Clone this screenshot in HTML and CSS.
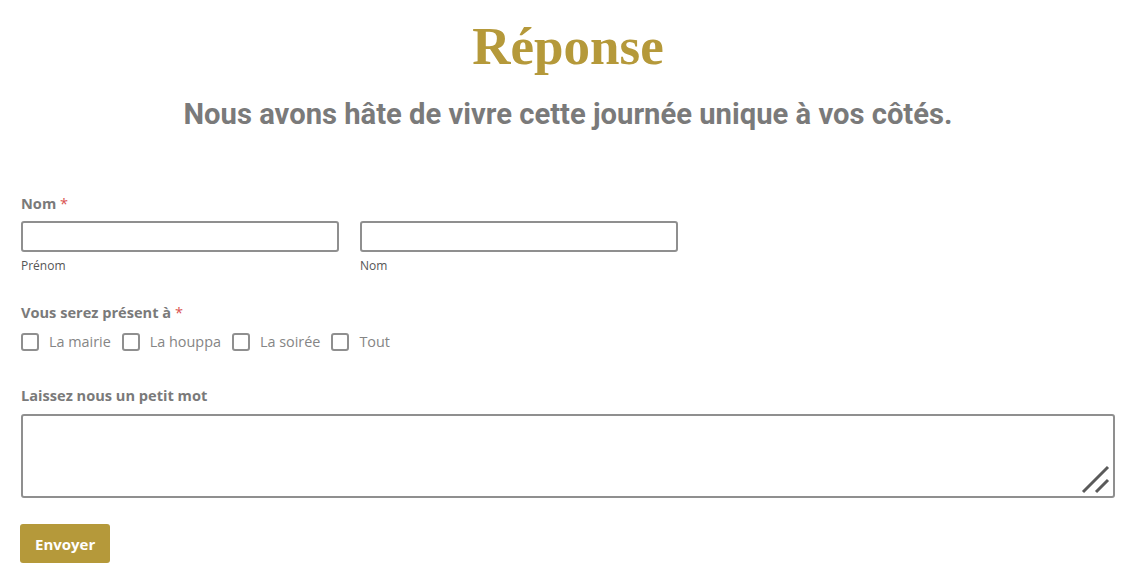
FILE: index.html
```html
<!DOCTYPE html>
<html lang="fr">

<head>
  <meta charset="UTF-8">
  <meta name="viewport" content="width=device-width, initial-scale=1.0">
  <title>Réponse</title>
  <link rel="stylesheet" href="styles.css">
</head>

<body>
  <div class="page">
    <h1 class="title">Réponse</h1>
    <h2 class="subtitle">Nous avons hâte de vivre cette journée unique à vos côtés.</h2>

    <form class="rsvp">
      <div class="field">
        <span class="label">Nom <span class="req">*</span></span>
        <div class="name-row">
          <label class="name-part">
            <input type="text" class="box">
            <span class="sub">Prénom</span>
          </label>
          <label class="name-part">
            <input type="text" class="box">
            <span class="sub">Nom</span>
          </label>
        </div>
      </div>

      <div class="field">
        <span class="label">Vous serez présent à <span class="req">*</span></span>
        <div class="checks">
          <label class="check"><input type="checkbox"><span>La mairie</span></label>
          <label class="check"><input type="checkbox"><span>La houppa</span></label>
          <label class="check"><input type="checkbox"><span>La soirée</span></label>
          <label class="check"><input type="checkbox"><span>Tout</span></label>
        </div>
      </div>

      <div class="field">
        <span class="label">Laissez nous un petit mot</span>
        <div class="area-wrap">
          <textarea class="box area"></textarea>
          <svg class="grip" width="30" height="30" viewBox="0 0 30 30">
            <line x1="2" y1="27" x2="27" y2="2" stroke="#5a5a5a" stroke-width="3" />
            <line x1="15" y1="27" x2="27" y2="15" stroke="#5a5a5a" stroke-width="3" />
          </svg>
        </div>
      </div>

      <button type="button" class="send">Envoyer</button>
    </form>
  </div>
</body>

</html>
```

FILE: styles.css
```css
html,
body {
  margin: 0;
  background: #fff;
  font-family: "Open Sans", Arial, sans-serif;
  color: #7a7a7a;
}

.page {
  padding: 14px 19px 0 21px;
}

.title {
  margin: 0;
  text-align: center;
  font-family: "Liberation Serif", "DejaVu Serif", serif;
  font-size: 53px;
  font-weight: bold;
  line-height: 64px;
  color: #b5993a;
}

.subtitle {
  margin: 18px 0 0 0;
  text-align: center;
  font-family: Roboto, Arial, sans-serif;
  font-size: 29.2px;
  font-weight: bold;
  line-height: 36px;
  color: #7a7a7a;
}

.rsvp {
  margin-top: 61px;
}

.field {
  margin-bottom: 28px;
}

.field:nth-child(2) {
  margin-bottom: 34px;
}

.label {
  display: block;
  font-size: 14.6px;
  font-weight: bold;
  line-height: 20px;
  margin-bottom: 8px;
  color: #7a7a7a;
}

.req {
  color: #d9534f;
  font-weight: normal;
}

.name-row {
  display: flex;
  gap: 21px;
}

.name-part {
  display: flex;
  flex-direction: column;
  width: 318px;
}

.box {
  box-sizing: border-box;
  border: 2px solid #8f8f8f;
  border-radius: 3px;
  background: #fff;
  outline: none;
  font-family: inherit;
}

.name-part .box {
  width: 100%;
  height: 31px;
}

.sub {
  font-size: 12px;
  line-height: 16px;
  margin-top: 6px;
  color: #555;
}

.checks {
  display: flex;
  align-items: center;
  gap: 11px;
  padding-top: 2px;
}

.check {
  display: flex;
  align-items: center;
  gap: 10px;
  font-size: 14.4px;
  color: #858585;
}

.check input {
  appearance: none;
  margin: 0;
  width: 18px;
  height: 18px;
  border: 2px solid #8f8f8f;
  border-radius: 3px;
  background: #fff;
}

.area-wrap {
  position: relative;
  padding-top: 1px;
}

.area {
  display: block;
  width: 100%;
  height: 84px;
  resize: none;
}

.grip {
  position: absolute;
  right: 4px;
  bottom: 3px;
}

.send {
  font-family: inherit;
  font-size: 15px;
  font-weight: bold;
  color: #fff;
  background: #b5993a;
  border: none;
  border-radius: 3px;
  padding: 0 15px;
  height: 39px;
  margin-top: -2px;
  margin-left: -1px;
}
```
